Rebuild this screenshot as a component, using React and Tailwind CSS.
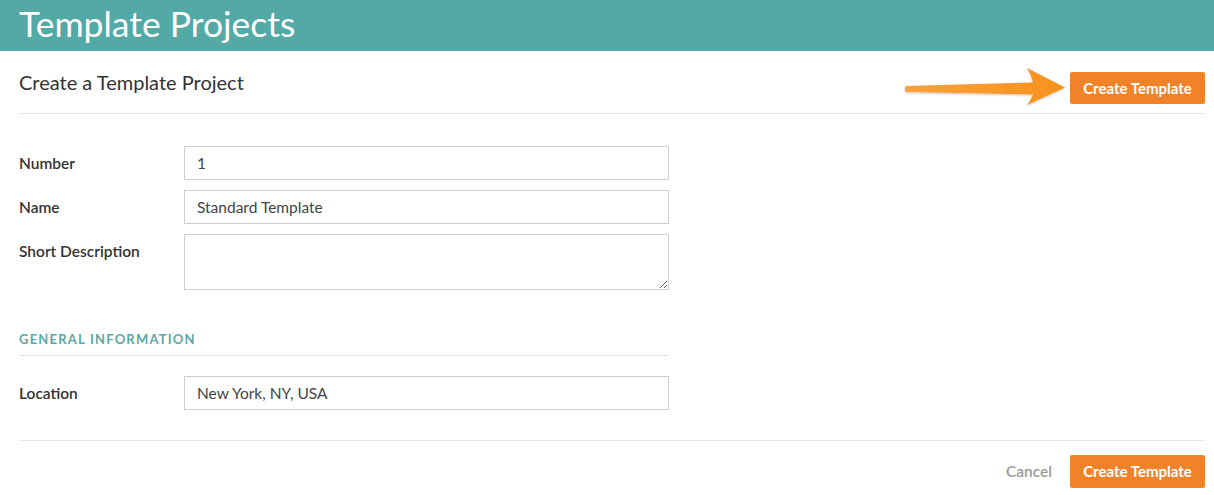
import React from "react";

const font = { fontFamily: "Lato, 'Open Sans', sans-serif" };

function Arrow() {
  return (
    <svg
      width="166"
      height="44"
      viewBox="0 0 166 44"
      className="absolute right-full top-[-7px] mr-[2px]"
    >
      <defs>
        <linearGradient id="ag" x1="0" x2="1" y1="0" y2="0">
          <stop offset="0" stopColor="#f9a13a" />
          <stop offset="1" stopColor="#f7921c" />
        </linearGradient>
        <filter id="sh" x="-10%" y="-30%" width="120%" height="160%">
          <feDropShadow dx="0" dy="1" stdDeviation="1.2" floodColor="#000" floodOpacity="0.25" />
        </filter>
      </defs>
      <path
        d="M4,21 L131,17.5 Q129,9 125,3 L163,22.5 L125,40 Q129,35 131,29.5 L4,27 Q2,24 4,21 Z"
        fill="url(#ag)"
        filter="url(#sh)"
      />
    </svg>
  );
}

function Field({ label, children }) {
  return (
    <div className="flex items-start">
      <div className="w-[165px] shrink-0 text-[15.5px] leading-[34px] font-semibold text-[#333]">
        {label}
      </div>
      {children}
    </div>
  );
}

function Input({ value }) {
  return (
    <input
      readOnly
      value={value}
      className="w-[485px] h-[34px] border border-[#cfcfcf] px-[12px] text-[15.5px] text-[#444] outline-none"
      style={font}
    />
  );
}

export default function App() {
  return (
    <div className="w-[1214px] h-[495px] bg-white overflow-hidden" style={font}>
      <div className="h-[51px] bg-[#52a9a6] px-[19px] flex items-center">
        <h1 className="text-[35.5px] leading-[51px] text-white font-normal mt-[-4px]">
          Template Projects
        </h1>
      </div>
      <div className="pl-[19px] pr-[9px]">
        <div className="flex justify-between items-start h-[63px] border-b border-[#e6e6e6] pt-[20px]">
          <h2 className="text-[20px] leading-[22px] text-[#333] font-normal">
            Create a Template Project
          </h2>
          <div className="relative mt-[1px]">
            <Arrow />
            <button className="h-[32px] w-[135px] bg-[#f0822a] rounded-[2px] text-white text-[15px] font-bold">
              Create Template
            </button>
          </div>
        </div>

        <div className="pt-[32px] flex flex-col gap-[10px]">
          <Field label="Number">
            <Input value="1" />
          </Field>
          <Field label="Name">
            <Input value="Standard Template" />
          </Field>
          <Field label="Short Description">
            <textarea
              readOnly
              className="w-[485px] h-[56px] border border-[#cfcfcf] px-[12px] py-[8px] text-[14px] outline-none resize-y"
            />
          </Field>
        </div>

        <div className="mt-[41px] w-[650px] border-b border-[#e6e6e6] pb-[8px]">
          <div className="text-[13px] leading-[16px] font-bold tracking-[1.2px] text-[#5aa9a5] uppercase">
            General Information
          </div>
        </div>

        <div className="pt-[20px]">
          <Field label="Location">
            <Input value="New York, NY, USA" />
          </Field>
        </div>

        <div className="mt-[30px] border-t border-[#e6e6e6] pt-[14px] flex justify-end items-center gap-[18px]">
          <span className="text-[15.5px] font-semibold text-[#999]">Cancel</span>
          <button className="h-[33px] w-[135px] bg-[#f0822a] rounded-[2px] text-white text-[15px] font-bold">
            Create Template
          </button>
        </div>
      </div>
    </div>
  );
}
